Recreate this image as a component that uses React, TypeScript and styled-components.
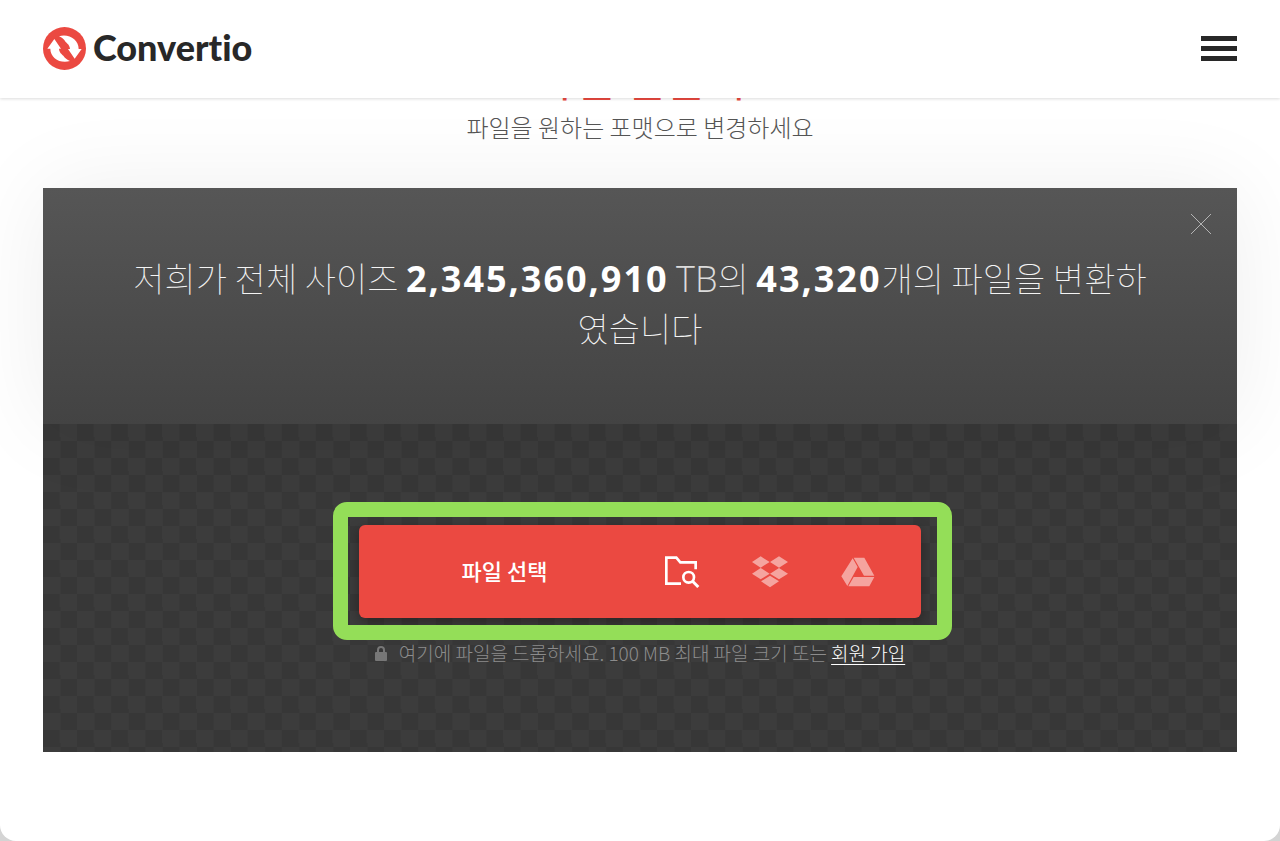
import React from "react";
import styled, { createGlobalStyle } from "styled-components";

const latin = `"Open Sans", "Noto Sans CJK KR", sans-serif`;
const hangul = `"Noto Sans CJK KR", sans-serif`;

const GlobalStyle = createGlobalStyle`
  *, *::before, *::after { box-sizing: border-box; }
  html { background: #d4d4d4; }
  body { margin: 0; font-family: ${hangul}; }
  button { border: 0; padding: 0; background: none; font: inherit; color: inherit; cursor: pointer; }
`;

const Page = styled.div`
  min-height: 100vh;
  background: #fff;
  border-radius: 0 0 16px 16px;
  overflow: clip;
`;

const Header = styled.header`
  position: sticky;
  top: 0;
  z-index: 3;
  display: flex;
  align-items: center;
  justify-content: space-between;
  height: 98px;
  padding: 0 43px 2px;
  background: #fff;
  box-shadow: 0 1px 3px rgba(0, 0, 0, 0.14);
`;

const Logo = styled.a`
  display: flex;
  align-items: center;
  gap: 7px;
  color: #282828;
  font: 900 36px/44px Lato, sans-serif;
  font-variant-ligatures: none;
  text-decoration: none;
`;

const Wordmark = styled.span`
  padding-bottom: 2px;
`;

const MenuButton = styled.button`
  display: flex;
  flex-direction: column;
  gap: 5px;
  width: 36px;
`;

const MenuBar = styled.span`
  height: 5px;
  width: 100%;
  background: #282828;
`;

const Main = styled.main`
  margin-top: -51px;
  padding: 0 43px 89px;
`;

const Title = styled.h1`
  margin: 0;
  color: #ea4940;
  font-size: 44px;
  font-weight: 400;
  line-height: 62px;
  text-align: center;
`;

const Subtitle = styled.p`
  margin: 0 0 43px;
  color: #555;
  font-size: 24px;
  font-weight: 300;
  line-height: 36px;
  text-align: center;
`;

const Banner = styled.section`
  position: relative;
  z-index: 1;
  display: flex;
  flex-direction: column;
  padding: 25px 25px 72px;
  background: linear-gradient(#565656, #434343);
  box-shadow: 0 0 90px rgba(0, 0, 0, 0.07);
`;

const CloseButton = styled.button`
  align-self: flex-end;
  display: flex;
  width: 22px;
  height: 22px;
`;

const Stats = styled.p`
  margin: 18px 55px 0;
  color: #f4f4f4;
  font-size: 34px;
  font-weight: 100;
  line-height: 49px;
  text-align: center;
`;

const Figure = styled.strong`
  color: #fff;
  font: 700 36px/49px ${latin};
  letter-spacing: 2px;
`;

const Unit = styled.span`
  color: #dcdcdc;
  font: 300 36px/49px ${latin};
`;

const DropZone = styled.section`
  display: flex;
  flex-direction: column;
  align-items: center;
  padding: 101px 20px 85px;
  background: repeating-conic-gradient(#3c3c3c 0 25%, #373737 0 50%) 0 0 / 34px 34px;
  background-repeat: round repeat;
`;

const Picker = styled.div`
  position: relative;
  display: grid;
  grid-template-columns: 1fr repeat(3, 88px);
  width: 562px;
  max-width: 100%;
  height: 93px;
  padding-right: 19px;
  border-radius: 6px;
  background: #eb4941;
  color: #fff;
  box-shadow: 0 4px 12px rgba(20, 0, 0, 0.35);
`;

const Highlight = styled.span`
  position: absolute;
  inset: -23px -31px -22px -26px;
  border: 15px solid #94de58;
  border-radius: 14px;
  pointer-events: none;
`;

const ChooseButton = styled.button`
  padding: 0 0 4px 12px;
  font-size: 22px;
  font-weight: 500;
`;

const SourceButton = styled.button<{ $muted?: boolean }>`
  display: flex;
  align-items: center;
  justify-content: center;
  color: ${(p) => (p.$muted ? "#f5a49f" : "#fff")};
`;

const Note = styled.p`
  display: flex;
  align-items: center;
  gap: 12px;
  margin: 21px 0 0;
  color: #8c8c8c;
  font-size: 19px;
  font-weight: 300;
  line-height: 28px;
`;

const SignUp = styled.a`
  color: #fff;
  text-underline-offset: 3px;
  text-decoration-thickness: 1px;
`;

function LogoMark() {
  return (
    <svg width="43" height="43" viewBox="0 0 129 129" aria-hidden="true">
      <circle cx="64.500" cy="64.500" r="64.500" fill="#eb4941" />
      <g fill="#fff">
        <path d="M34 36 L54 65 H48 C49 77 56 81 61 86 C66 93 72 98 81 102 C52 111 22 93 22 65 H13 Z" />
        <path d="M95 95 L75 66 H81 C80 54 73 50 68 45 C63 37 57 31 48 28 C77 19 107 38 107 66 H116 Z" />
      </g>
    </svg>
  );
}

function CloseIcon() {
  return (
    <svg width="22" height="22" viewBox="0 0 22 22" stroke="#b4b4b4" aria-hidden="true">
      <path d="M1 1 L21 21 M21 1 L1 21" />
    </svg>
  );
}

function FolderIcon() {
  return (
    <svg width="36" height="33" viewBox="72 48 108 99" fill="none" stroke="currentColor" strokeWidth="8" aria-hidden="true">
      <path d="M123 134 H79 V56 H109 L121 70 H167 V91" />
      <circle cx="146" cy="115" r="16" />
      <path d="M157 126 L175 144" strokeWidth="9" />
    </svg>
  );
}

function DropboxIcon() {
  return (
    <svg width="37" height="32" viewBox="334 48 111 96" fill="currentColor" aria-hidden="true">
      <path d="M360 49 L387 66 L360 83 L334 66 Z M415 49 L442 66 L415 83 L388 66 Z M360 84 L387 101 L360 118 L334 101 Z M415 84 L442 101 L415 118 L388 101 Z M388 107 L415 124 L388 142 L361 124 Z" />
    </svg>
  );
}

function DriveIcon() {
  return (
    <svg width="34" height="30" viewBox="603 48 102 90" fill="currentColor" aria-hidden="true">
      <path d="M638 52 L653 78 L622 135 L604 106 Z M641 50 H673 L703 104 H672 Z M641 108 H703 L688 136 H625 Z" />
    </svg>
  );
}

function LockIcon() {
  return (
    <svg width="12" height="15" viewBox="0 0 12 15" aria-hidden="true">
      <path d="M3 7 V4 a3 3 0 0 1 6 0 V7" fill="none" stroke="#777" strokeWidth="2" />
      <rect y="6" width="12" height="9" rx="1" fill="#777" />
    </svg>
  );
}

export default function App() {
  return (
    <>
      <GlobalStyle />
      <Page>
        <Header>
          <Logo href="#">
            <LogoMark />
            <Wordmark>Convertio</Wordmark>
          </Logo>
          <MenuButton type="button" aria-label="메뉴">
            <MenuBar />
            <MenuBar />
            <MenuBar />
          </MenuButton>
        </Header>
        <Main>
          <Title>파일 변환기</Title>
          <Subtitle>파일을 원하는 포맷으로 변경하세요</Subtitle>
          <Banner>
            <CloseButton type="button" aria-label="닫기">
              <CloseIcon />
            </CloseButton>
            <Stats>
              저희가 전체 사이즈 <Figure>2,345,360,910</Figure> <Unit>TB</Unit>의 <Figure>43,320</Figure>개의 파일을 변환하였습니다
            </Stats>
          </Banner>
          <DropZone>
            <Picker>
              <ChooseButton type="button">파일 선택</ChooseButton>
              <SourceButton type="button" aria-label="컴퓨터에서 선택">
                <FolderIcon />
              </SourceButton>
              <SourceButton type="button" aria-label="Dropbox" $muted>
                <DropboxIcon />
              </SourceButton>
              <SourceButton type="button" aria-label="Google Drive" $muted>
                <DriveIcon />
              </SourceButton>
              <Highlight />
            </Picker>
            <Note>
              <LockIcon />
              <span>
                여기에 파일을 드롭하세요. 100 MB 최대 파일 크기 또는 <SignUp href="#">회원 가입</SignUp>
              </span>
            </Note>
          </DropZone>
        </Main>
      </Page>
    </>
  );
}
